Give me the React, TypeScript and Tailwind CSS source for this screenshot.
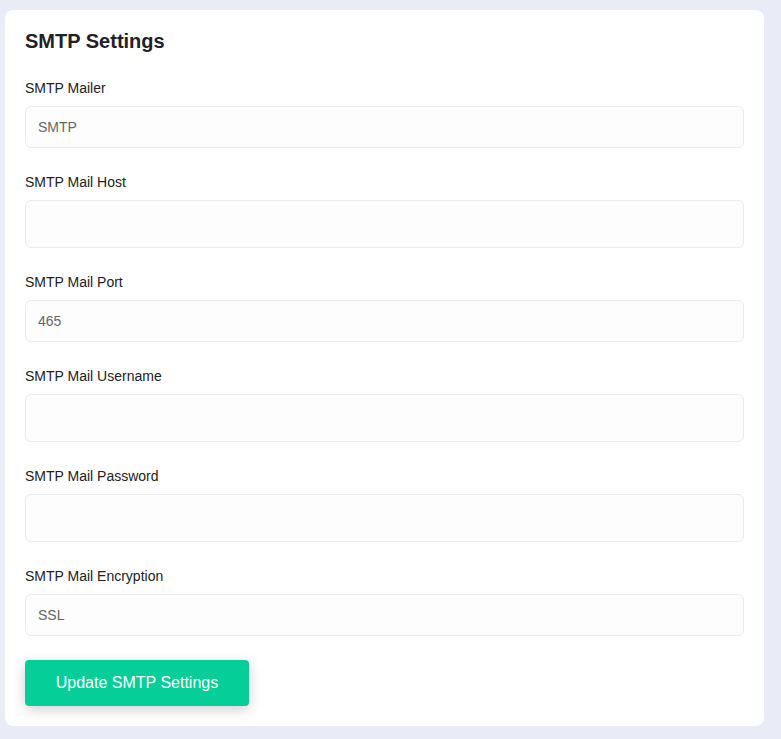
const fields = [
  { label: "SMTP Mailer", value: "SMTP" },
  { label: "SMTP Mail Host", value: "" },
  { label: "SMTP Mail Port", value: "465" },
  { label: "SMTP Mail Username", value: "" },
  { label: "SMTP Mail Password", value: "" },
  { label: "SMTP Mail Encryption", value: "SSL" },
];

const App = () => {
  return (
    <div
      className="min-h-screen bg-[#e9ebf6] pl-[5px] pr-[17px] pt-[10px] pb-[13px]"
      style={{ fontFamily: '"Liberation Sans", Arial, sans-serif' }}
    >
      <div className="bg-white rounded-lg px-5 pt-[17px] pb-5">
        <h2 className="text-xl leading-7 font-bold text-[#1f2126] mb-[23px]">
          SMTP Settings
        </h2>
        <div className="flex flex-col gap-6">
          {fields.map((field) => (
            <div key={field.label}>
              <label className="block text-sm leading-5 text-[#222] mb-2">
                {field.label}
              </label>
              <div
                className={`flex items-center w-full px-3 border border-[#ebebeb] rounded-md bg-[#fdfdfd] text-sm text-[#666] ${
                  field.value ? "h-[42px]" : "h-12"
                }`}
              >
                {field.value}
              </div>
            </div>
          ))}
          <div>
            <button className="w-[224px] h-[46px] rounded bg-[#05ce99] text-white text-base shadow-[0_4px_14px_rgba(0,0,0,0.18)]">
              Update SMTP Settings
            </button>
          </div>
        </div>
      </div>
    </div>
  );
};

export default App;
